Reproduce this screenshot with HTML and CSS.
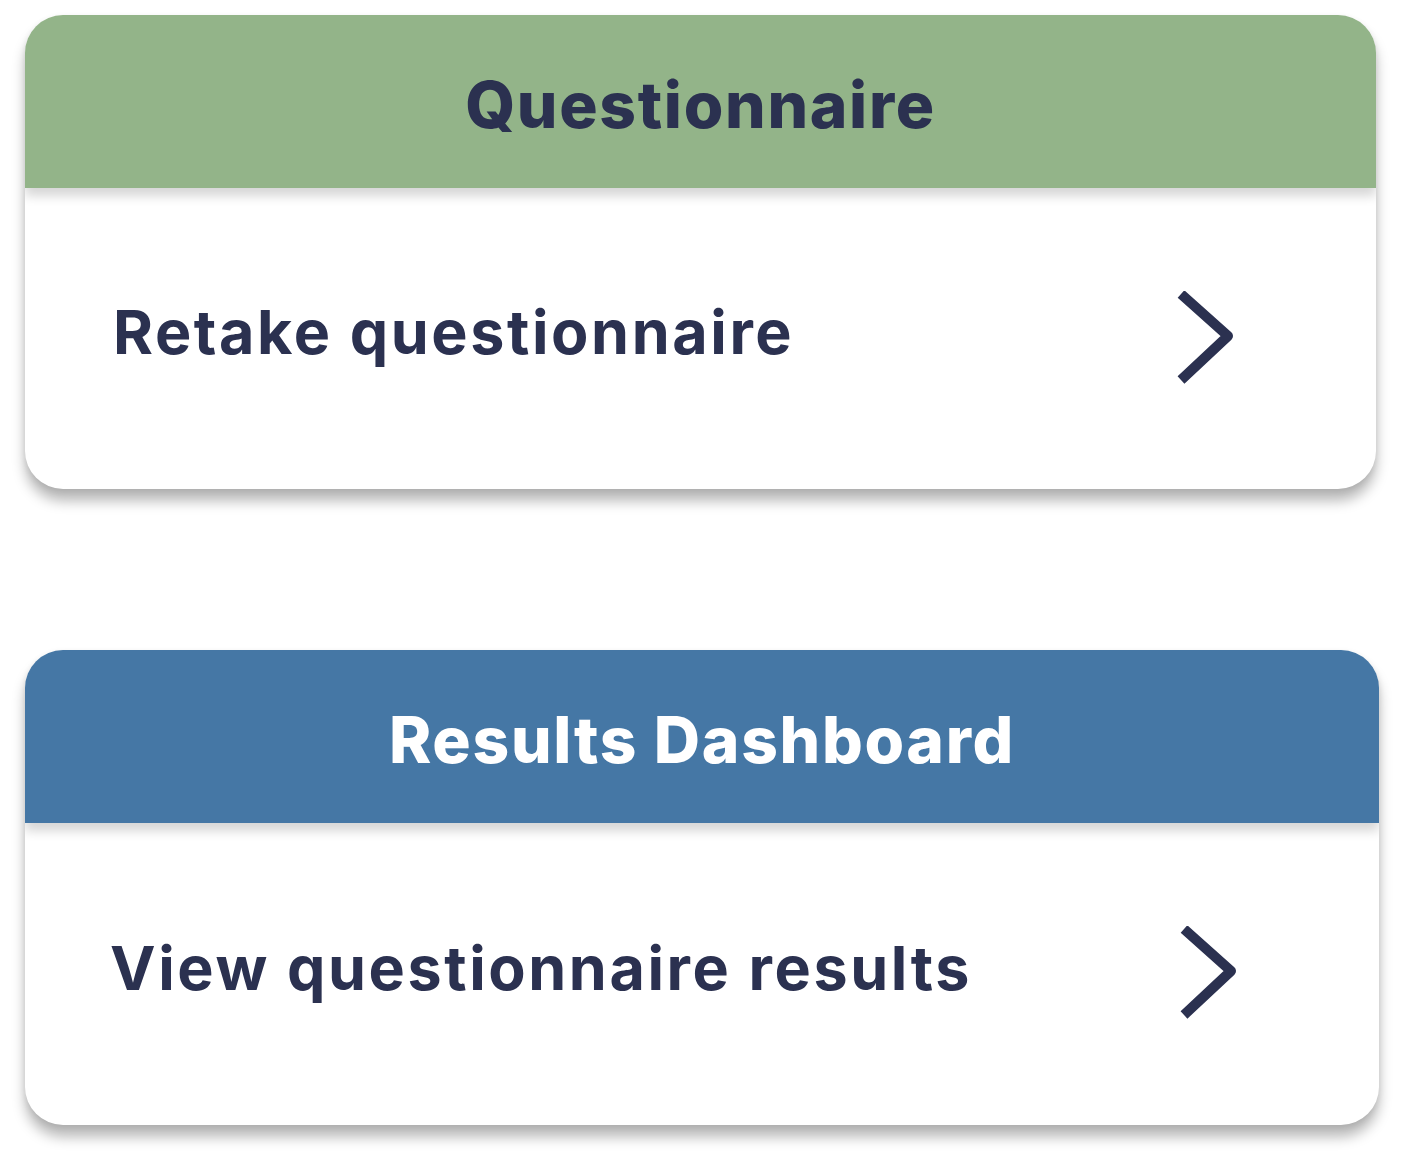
FILE: index.html
```html
<!DOCTYPE html>
<html lang="en">
<head>
<meta charset="utf-8">
<title>Questionnaire</title>
<link rel="stylesheet" href="styles.css">
</head>
<body>
<main class="page">
  <section class="card card-q">
    <header class="card-head head-green"><h2 class="head-title">Questionnaire</h2></header>
    <a class="card-row" href="#">
      <span class="row-label">Retake questionnaire</span>
      <svg class="chev" width="70" height="100" viewBox="0 0 70 100" aria-hidden="true"><polyline points="10,3 57,45 10,89" fill="none" stroke="#2b3150" stroke-width="10" stroke-linejoin="round"/></svg>
    </a>
  </section>
  <section class="card card-r">
    <header class="card-head head-blue"><h2 class="head-title light">Results Dashboard</h2></header>
    <a class="card-row row-r" href="#">
      <span class="row-label">View questionnaire results</span>
      <svg class="chev" width="70" height="100" viewBox="0 0 70 100" aria-hidden="true"><polyline points="10,3 57,45 10,89" fill="none" stroke="#2b3150" stroke-width="10" stroke-linejoin="round"/></svg>
    </a>
  </section>
</main>
</body>
</html>
```
FILE: styles.css
```css
html, body {
  margin: 0;
  padding: 0;
  background: #ffffff;
}
body {
  font-family: Inter, "Noto Sans", "Liberation Sans", sans-serif;
  color: #2b3150;
  min-height: 1158px;
}
.page {
  display: flex;
  flex-direction: column;
  gap: 161px;
  padding: 15px 0 0 25px;
}
.card {
  background: #ffffff;
  border-radius: 38px;
  overflow: hidden;
  box-shadow: 0 12px 13px rgba(0, 0, 0, 0.28), 0 2px 6px rgba(0, 0, 0, 0.08);
  display: flex;
  flex-direction: column;
}
.card-q { width: 1351px; height: 474px; }
.card-r { width: 1354px; height: 475px; }
.card-head {
  position: relative;
  z-index: 1;
  height: 173px;
  flex: none;
  display: flex;
  align-items: center;
  justify-content: center;
  box-shadow: 0 8px 10px rgba(0, 0, 0, 0.16);
}
.head-green { background: #93b489; }
.head-blue { background: #4577a5; }
.head-title {
  margin: 0;
  font-size: 64px;
  font-weight: 800;
  letter-spacing: 1.7px;
  color: #2b3150;
  line-height: 1;
  padding-top: 6px;
}
.head-title.light { color: #ffffff; }
.card-row {
  flex: 1;
  display: flex;
  align-items: center;
  justify-content: space-between;
  padding: 0 135px 12px 88px;
  text-decoration: none;
  color: #2b3150;
}
.row-r { padding-left: 85px; }
.row-label {
  font-size: 61px;
  font-weight: 700;
  letter-spacing: 2.6px;
  line-height: 1;
}
.chev {
  display: block;
  margin-top: 16px;
}
```
